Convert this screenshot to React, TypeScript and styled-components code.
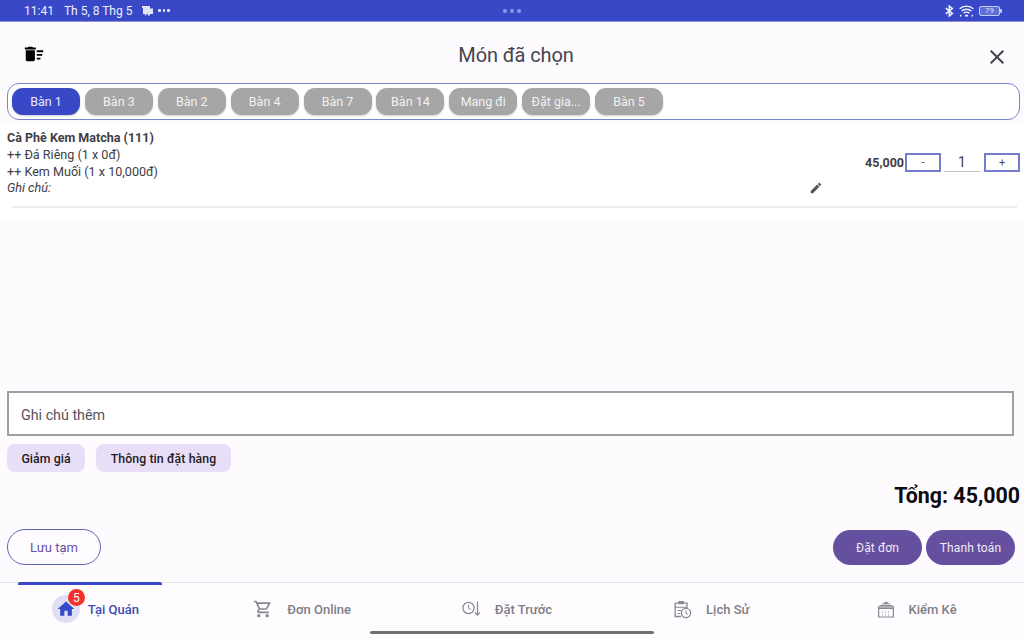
import React from "react";
import styled, { createGlobalStyle } from "styled-components";
import { MdDeleteSweep, MdClose, MdEdit, MdHome, MdOutlineShoppingCart } from "react-icons/md";

const Global = createGlobalStyle`
  html, body { margin: 0; padding: 0; width: 1024px; height: 640px; overflow: hidden; background: #fefbff; }
  * { box-sizing: border-box; }
  body { font-family: Roboto, "Liberation Sans", sans-serif; }
`;

const Page = styled.div`
  position: relative; width: 1024px; height: 640px; display: flex; flex-direction: column; background: #fefbff;
`;
const StatusBar = styled.div`
  height: 21px; flex: none; background: #3848c7; color: #eef0fb; display: grid; grid-template-columns: 1fr auto 1fr;
  align-items: center; padding: 0 24px; font-size: 12px; box-shadow: 0 1px 0 #8791dc;
`;
const StatusLeft = styled.div`display: flex; align-items: center;`;
const StatusDate = styled.span`margin-left: 10px;`;
const NotifIcon = styled.svg`margin-left: 10px; display: block;`;
const More = styled.span`margin-left: 5px; display: flex; gap: 2px;`;
const Dot = styled.i<{ $dim?: boolean }>`
  width: ${p => (p.$dim ? 4 : 2.5)}px; height: ${p => (p.$dim ? 4 : 2.5)}px; border-radius: 50%;
  background: ${p => (p.$dim ? "#8f9ae6" : "#e8eafa")}; display: block;
`;
const CenterDots = styled.div`display: flex; gap: 3px;`;
const StatusRight = styled.div`display: flex; justify-content: flex-end; align-items: center; gap: 5px;`;
const Battery = styled.span`
  position: relative; width: 21px; height: 10px; border: 1px solid #c5caf0; border-radius: 2px; font-size: 8px; line-height: 8px;
  text-align: center; color: #d9dcf5; background: #5f6dd4;
  &::after { content: ""; position: absolute; right: -3px; top: 2px; width: 2px; height: 4px; background: #c5caf0; border-radius: 0 1px 1px 0; }
`;

const Header = styled.header`
  height: 62px; flex: none; display: grid; grid-template-columns: 1fr auto 1fr; align-items: center; padding: 0 15px 0 23px;
`;
const TrashBtn = styled.div`display: flex; color: #000; height: 24px; margin-top: 5px;`;
const Title = styled.h1`margin: 6px 0 0; font-size: 20px; font-weight: 400; letter-spacing: -.12px; color: #45434f; line-height: 28px;`;
const CloseBtn = styled.div`display: flex; justify-content: flex-end; color: #45434f; margin-top: 9px;`;

const TabsBox = styled.div`
  height: 37px; flex: none; margin: 0 4px 0 7px; padding: 4px; display: flex; gap: 4.875px; background: #fff;
  border: 1px solid #7b83cf; border-radius: 12px;
`;
const Tab = styled.div<{ $active?: boolean }>`
  width: 68px; height: 27px; border-radius: 11px; display: flex; align-items: center; justify-content: center;
  font-size: 12.5px; white-space: nowrap; color: ${p => (p.$active ? "#e8eafa" : "#f2f2f2")};
  background: ${p => (p.$active ? "#3848c7" : "#a6a6a6")}; box-shadow: 0 1px 2px rgba(0,0,0,.2);
`;

const ItemList = styled.section`
  height: 93px; flex: none; margin-top: 5px; background: #fff; padding: 4px 4px 0 7px;
`;
const ItemRow = styled.div`
  display: flex; align-items: stretch; height: 77px;
`;
const ItemText = styled.div`flex: 1; font-size: 12.6px; line-height: 17px; color: #3f3d45;`;
const ItemName = styled.div`font-weight: 700; font-size: 12.5px;`;
const ItemNote = styled.div`font-style: italic; margin-top: -1px;`;
const EditWrap = styled.div`align-self: flex-end; display: flex; margin: 0 42px 11px 0; color: #55535c;`;
const Controls = styled.div`display: flex; align-items: center; height: 67px;`;
const Price = styled.span`font-size: 12.5px; font-weight: 700; color: #3f3d45; margin-right: 1px;`;
const QtyBtn = styled.div`
  width: 36px; height: 19px; border: 2px solid #747cd2; display: flex; align-items: center; justify-content: center;
  font-size: 11px; color: #45434f; line-height: 1;
`;
const Qty = styled.div`
  width: 36px; margin: 0 4px 0 3px; height: 19px; border-bottom: 1px solid #c4c4c4; text-align: center; font-size: 14px; line-height: 18px; color: #3f3d45;
`;
const Divider = styled.div`height: 2px; margin: 0 3px 0 5px; background: #ecebee;`;

const Spacer = styled.div`flex: 1;`;
const NoteInput = styled.div`
  height: 45px; flex: none; margin: 0 10px 0 7px; padding: 2px 12px 0; background: #fff; border: 2px solid #a09fa4;
  display: flex; align-items: center; font-size: 14.3px; color: #55525c;
`;
const Chips = styled.div`display: flex; gap: 11px; margin: 8px 0 0 7px; flex: none;`;
const Chip = styled.div`
  height: 28px; padding: 1px 14.4px 0; border-radius: 8px; background: #e8def8; display: flex; align-items: center;
  font-size: 12.3px; font-weight: 500; color: #1d1b20; letter-spacing: .1px;
`;
const Total = styled.div`
  flex: none; height: 28px; margin: 10px 4px 0 0; text-align: right; font-size: 21.4px; line-height: 28px; font-weight: 700; color: #0c0b10;
`;
const Actions = styled.div`
  flex: none; height: 36px; margin: 19px 9px 17px 7px; display: flex; align-items: center; justify-content: space-between;
`;
const OutlineBtn = styled.div`
  width: 94px; height: 36px; border-radius: 18px; border: 1px solid #5f66b4; display: flex; align-items: center; justify-content: center;
  font-size: 13px; padding-top: 1px; color: #6750a4; background: #fffcff;
`;
const FilledGroup = styled.div`display: flex; gap: 4px;`;
const FilledBtn = styled.div`
  width: 89px; height: 35px; border-radius: 18px; background: #65509f; color: #efeaf7; display: flex; align-items: center; justify-content: center;
  font-size: 12px; padding-top: 1px; letter-spacing: .1px;
`;

const Nav = styled.nav`
  position: relative; height: 58px; flex: none; display: grid; grid-template-columns: repeat(5, 204.8px); background: #fefcff;
  border-top: 1px solid #e4e0e8;
`;
const Indicator = styled.div`
  position: absolute; left: 18px; top: -1px; width: 144px; height: 3px; background: #3848c7; border-radius: 2px 2px 0 0;
`;
const NavItem = styled.div<{ $active?: boolean }>`
  display: flex; align-items: center; justify-content: center; height: 52px; padding-right: 10px; gap: 14px;
  font-size: 13px; font-weight: 500; color: ${p => (p.$active ? "#3e4cb4" : "#7f7e85")};
  & > span { padding-top: 1px; }
  & > svg { color: #88878d; }
`;
const HomeItem = styled(NavItem)`gap: 8px; padding-right: 14px;`;
const IconCircle = styled.div`
  position: relative; width: 28px; height: 28px; border-radius: 50%; background: #dfe0f4; display: flex; align-items: center; justify-content: center; color: #3848c7;
`;
const Badge = styled.div`
  position: absolute; right: -5px; top: -6px; width: 17px; height: 17px; border-radius: 50%; background: #f0312c; color: #fff;
  font-size: 12px; font-weight: 400; display: flex; align-items: center; justify-content: center;
`;
const HomeBar = styled.div`
  position: absolute; left: 370px; bottom: 6px; width: 284px; height: 3px; border-radius: 2px; background: #6f6f72;
`;

const tabs = ["Bàn 1", "Bàn 3", "Bàn 2", "Bàn 4", "Bàn 7", "Bàn 14", "Mang đi", "Đặt gia...", "Bàn 5"];

const ClockDown = () => (
  <svg width="19" height="18" viewBox="0 0 19 18" fill="none" stroke="currentColor" strokeWidth="1.2">
    <circle cx="6.5" cy="8" r="5.6" />
    <path d="M6.5 4.8V8.3L8.8 9.4" strokeWidth="1" />
    <path d="M15.500 1.500V15M13 12.400l2.500 2.800 2.500-2.800" />
  </svg>
);
const ClipboardClock = () => (
  <svg width="18" height="19" viewBox="0 0 18 19" fill="none" stroke="currentColor" strokeWidth="1.3">
    <path d="M7 16.500H1.200V3.200H13V8" />
    <rect x="4.200" y="1" width="5.800" height="3.200" rx=".8" fill="currentColor" stroke="none" />
    <path d="M1.200 7.200H13M3.500 10.500H7M3.500 13.500H6" strokeWidth="1.1" />
    <circle cx="12" cy="13" r="4.600" />
    <path d="M12 10.500v2.800l1.800 1" strokeWidth="1" />
  </svg>
);
const Warehouse = () => (
  <svg width="18" height="18" viewBox="0 0 18 18" fill="none">
    <path d="M1 6.500 9 1.500l8 5V9H1z" fill="currentColor" />
    <path d="M3 4.500h12M2 7h14" stroke="#fefcff" strokeWidth=".7" />
    <path d="M1.600 9v8M16.400 9v8M1 17h16" stroke="currentColor" strokeWidth="1.2" />
    <path d="M5 12h1M8 12h1M11 12h1M5 15h1M8 15h1M11 15h1" stroke="currentColor" strokeWidth="1.2" />
  </svg>
);
const Wifi = () => (
  <svg width="15" height="12" viewBox="0 0 15 12" fill="none" stroke="#eef0fb" strokeWidth="1.4">
    <path d="M.6 3.800C4.400.2 10.600.2 14.400 3.800" />
    <path d="M2.600 6.100c2.700-2.500 7.100-2.500 9.800 0" />
    <path d="M4.600 8.300c1.600-1.500 4.200-1.500 5.800 0" />
    <path d="M6 10.600h3M1 10.600h1.400M12.600 10.600H14" strokeWidth="1.6" />
  </svg>
);
const Bluetooth = () => (
  <svg width="9" height="12" viewBox="0 0 9 12" fill="none" stroke="#eef0fb" strokeWidth="1.5">
    <path d="M.8 3.200 7.400 8.600 4.300 11V1l3.100 2.400L.8 8.800" />
  </svg>
);

export default function App() {
  return (
    <Page>
      <Global />
      <StatusBar>
        <StatusLeft>
          <span>11:41</span>
          <StatusDate>Th 5, 8 Thg 5</StatusDate>
          <NotifIcon width="11" height="12" viewBox="0 0 11 12" fill="#dfe2f7">
            <path d="M0 1h8v9L6 11V8.500L4.500 9.500 3 11V9H1V3H0zM8 3.500h3V9H8z" />
          </NotifIcon>
          <More><Dot /><Dot /><Dot /></More>
        </StatusLeft>
        <CenterDots><Dot $dim /><Dot $dim /><Dot $dim /></CenterDots>
        <StatusRight>
          <Bluetooth />
          <Wifi />
          <Battery>79</Battery>
        </StatusRight>
      </StatusBar>
      <Header>
        <TrashBtn><MdDeleteSweep size={22} /></TrashBtn>
        <Title>Món đã chọn</Title>
        <CloseBtn><MdClose size={24} /></CloseBtn>
      </Header>
      <TabsBox>
        {tabs.map((t, i) => <Tab key={t} $active={i === 0}>{t}</Tab>)}
      </TabsBox>
      <ItemList>
        <ItemRow>
          <ItemText>
            <ItemName>Cà Phê Kem Matcha (111)</ItemName>
            <div>++ Đá Riêng (1 x 0đ)</div>
            <div>++ Kem Muối (1 x 10,000đ)</div>
            <ItemNote>Ghi chú:</ItemNote>
          </ItemText>
          <EditWrap><MdEdit size={14} /></EditWrap>
          <Controls>
            <Price>45,000</Price>
            <QtyBtn>-</QtyBtn>
            <Qty>1</Qty>
            <QtyBtn>+</QtyBtn>
          </Controls>
        </ItemRow>
        <Divider />
      </ItemList>
      <Spacer />
      <NoteInput>Ghi chú thêm</NoteInput>
      <Chips>
        <Chip>Giảm giá</Chip>
        <Chip>Thông tin đặt hàng</Chip>
      </Chips>
      <Total>Tổng: 45,000</Total>
      <Actions>
        <OutlineBtn>Lưu tạm</OutlineBtn>
        <FilledGroup>
          <FilledBtn>Đặt đơn</FilledBtn>
          <FilledBtn>Thanh toán</FilledBtn>
        </FilledGroup>
      </Actions>
      <Nav>
        <Indicator />
        <HomeItem $active>
          <IconCircle><MdHome size={20} /><Badge>5</Badge></IconCircle>
          <span>Tại Quán</span>
        </HomeItem>
        <NavItem><MdOutlineShoppingCart size={20} /><span>Đơn Online</span></NavItem>
        <NavItem><ClockDown /><span>Đặt Trước</span></NavItem>
        <NavItem><ClipboardClock /><span>Lịch Sử</span></NavItem>
        <NavItem><Warehouse /><span>Kiểm Kê</span></NavItem>
      </Nav>
      <HomeBar />
    </Page>
  );
}
